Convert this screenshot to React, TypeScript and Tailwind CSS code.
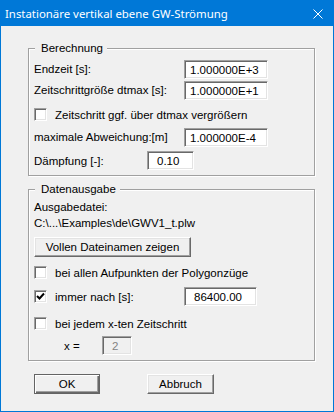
import * as React from "react"

const SUNKEN =
  "border border-t-[#a0a0a0] border-l-[#a0a0a0] border-r-white border-b-white shadow-[inset_1px_1px_0_#696969,inset_-1px_-1px_0_#e3e3e3]"

function Field({ value, className, disabled }: { value: string; className: string; disabled?: boolean }) {
  return (
    <div className={`h-[19px] flex items-center ${SUNKEN} ${disabled ? "bg-[#f0f0f0] text-[#838383]" : "bg-white text-black"} ${className}`}>
      {value}
    </div>
  )
}

function Check({ checked }: { checked?: boolean }) {
  return (
    <div className={`w-[13px] h-[13px] shrink-0 bg-white flex items-center justify-center ${SUNKEN}`}>
      {checked && (
        <svg width="9" height="9" viewBox="0 0 9 9">
          <path d="M1 4 L3.5 6.5 L8 1.5" fill="none" stroke="#000" strokeWidth="2" />
        </svg>
      )}
    </div>
  )
}

function Group({ title, children, className }: { title: string; children: React.ReactNode; className?: string }) {
  return (
    <div className={`relative w-[287px] border border-[#a0a0a0] shadow-[inset_1px_1px_0_#fff,1px_1px_0_#fff] pl-[5px] ${className ?? ""}`}>
      <span className="absolute -top-[8px] left-[6px] h-[14px] pl-[6px] pr-[4px] bg-[#f0f0f0] leading-[14px]">{title}</span>
      {children}
    </div>
  )
}

export default function App() {
  return (
    <div className="w-[334px] h-[412px] flex flex-col bg-[#f0f0f0] border border-[#0078d7] text-[11.5px] leading-[14px] text-black" style={{ fontFamily: "'Liberation Sans', Arial, sans-serif" }}>
      {/* Title bar */}
      <div className="h-[25px] shrink-0 bg-[#0078d7] flex items-center justify-between pl-[4px] pr-[10px] text-white text-[11.4px]" style={{ fontFamily: "'Noto Sans', sans-serif" }}>
        <span>Instationäre vertikal ebene GW-Strömung</span>
        <svg width="10" height="10" viewBox="0 0 10 10">
          <path d="M0.5 0.5 L9.5 9.5 M9.5 0.5 L0.5 9.5" stroke="#fff" strokeWidth="1" />
        </svg>
      </div>

      <div className="flex-1 flex flex-col pl-[27px] pt-[22px]">
        {/* Berechnung */}
        <Group title="Berechnung" className="pt-[11px] pb-[5px]">
          <div className="h-[19px] flex items-center">
            <span className="w-[150px] -mt-[2px]">Endzeit [s]:</span>
            <Field value="1.000000E+3" className="w-[84px] pl-[5px]" />
          </div>
          <div className="h-[19px] mt-[2px] flex items-center">
            <span className="w-[150px] -mt-[2px]">Zeitschrittgröße dtmax [s]:</span>
            <Field value="1.000000E+1" className="w-[84px] pl-[5px]" />
          </div>
          <div className="h-[13px] mt-[8px] flex items-center gap-[8px]">
            <Check />
            <span>Zeitschritt ggf. über dtmax vergrößern</span>
          </div>
          <div className="h-[19px] mt-[7px] flex items-center">
            <span className="w-[150px] -mt-[2px]">maximale Abweichung:[m]</span>
            <Field value="1.000000E-4" className="w-[84px] pl-[5px]" />
          </div>
          <div className="h-[19px] mt-[4px] flex items-center">
            <span className="w-[113px]">Dämpfung [-]:</span>
            <Field value="0.10" className="w-[47px] pl-[9px]" />
          </div>
        </Group>

        {/* Datenausgabe */}
        <Group title="Datenausgabe" className="mt-[13px] pt-[10px] pb-[5px]">
          <div className="h-[14px]">Ausgabedatei:</div>
          <div className="h-[14px] mt-[2px]">C:\...\Examples\de\GWV1_t.plw</div>
          <button className="mt-[7px] w-[157px] h-[20px] flex items-center justify-center bg-[#f0f0f0] border border-t-white border-l-white border-r-[#696969] border-b-[#696969] shadow-[inset_-1px_-1px_0_#a0a0a0,inset_1px_1px_0_#e3e3e3]">
            Vollen Dateinamen zeigen
          </button>
          <div className="h-[13px] mt-[9px] flex items-center gap-[8px]">
            <Check />
            <span>bei allen Aufpunkten der Polygonzüge</span>
          </div>
          <div className="h-[19px] mt-[8px] flex items-center">
            <Check checked />
            <span className="w-[129px] ml-[8px]">immer nach [s]:</span>
            <Field value="86400.00" className="w-[73px] pl-[9px]" />
          </div>
          <div className="h-[13px] mt-[11px] flex items-center gap-[8px]">
            <Check />
            <span>bei jedem x-ten Zeitschritt</span>
          </div>
          <div className="h-[19px] mt-[6px] flex items-center">
            <span className="ml-[30px] w-[38px]">x =</span>
            <Field value="2" disabled className="w-[30px] pl-[9px]" />
          </div>
        </Group>

        {/* Buttons */}
        <div className="mt-[13px] ml-[6px] flex gap-[47px]">
          <button className="w-[66px] h-[20px] flex items-center justify-center bg-[#f0f0f0] border border-[#646464] shadow-[inset_1px_1px_0_#fff,inset_-1px_-1px_0_#696969,inset_-2px_-2px_0_#a0a0a0]">
            OK
          </button>
          <button className="w-[67px] h-[20px] flex items-center justify-center bg-[#f0f0f0] border border-t-white border-l-white border-r-[#696969] border-b-[#696969] shadow-[inset_-1px_-1px_0_#a0a0a0,inset_1px_1px_0_#e3e3e3]">
            Abbruch
          </button>
        </div>
      </div>
    </div>
  )
}
